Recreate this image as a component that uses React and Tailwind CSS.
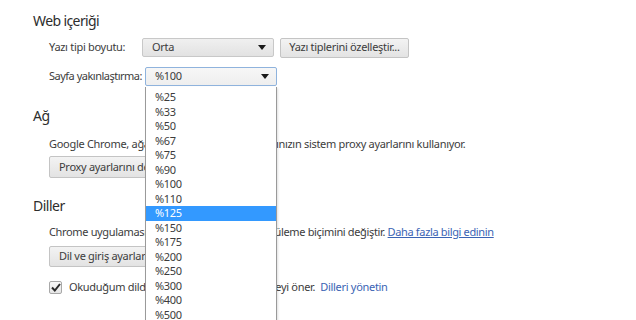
import React from 'react';

const zoomOptions = ['%25', '%33', '%50', '%67', '%75', '%90', '%100', '%110', '%125', '%150', '%175', '%200', '%250', '%300', '%400', '%500'];

function Caret() {
  return (
    <svg width="8" height="5" viewBox="0 0 8 5" className="shrink-0">
      <path d="M0 0 L8 0 L4 5 Z" fill="#1a1a1a" />
    </svg>
  );
}

function Select({ value, focused, children }) {
  return (
    <div className="relative">
      <div
        className={`flex items-center justify-between w-[132px] h-[19px] pl-[9px] pr-[7px] rounded-[2px] border ${
          focused
            ? 'border-[#8fb3dd] bg-gradient-to-b from-[#f7f7f7] to-[#eeeeee]'
            : 'border-[#c8c8c8] bg-gradient-to-b from-[#f0f0f0] to-[#e2e2e2]'
        }`}
      >
        <span>{value}</span>
        <Caret />
      </div>
      {children}
    </div>
  );
}

function Button({ children, className = '' }) {
  return (
    <div
      className={`flex items-center px-[9px] rounded-[2px] border border-[#c4c4c4] bg-gradient-to-b from-[#f3f3f3] to-[#e3e3e3] whitespace-nowrap ${className}`}
    >
      {children}
    </div>
  );
}

export default function App() {
  return (
    <div
      className="w-[636px] h-[320px] overflow-hidden bg-white text-[11px] tracking-[-0.3px] text-[#3c3c3c] select-none"
      style={{ fontFamily: '"Noto Sans", "Open Sans", sans-serif' }}
    >
      <div className="pl-[33px] pt-[11px]">
        {/* Web içeriği */}
        <h3 className="text-[14px] tracking-[-0.6px] text-[#2d2d2d] leading-[20px]">Web içeriği</h3>
        <div className="pl-[16px] mt-[7px] flex flex-col gap-[10px]">
          <div className="flex items-center h-[19px] whitespace-nowrap">
            <span className="w-[93px]">Yazı tipi boyutu:</span>
            <Select value="Orta" />
            <Button className="ml-[6px] w-[129px] h-[20px] justify-center">Yazı tiplerini özelleştir...</Button>
          </div>
          <div className="flex items-center h-[19px] whitespace-nowrap">
            <span className="w-[96px] tracking-[-0.5px]">Sayfa yakınlaştırma:</span>
            <Select value="%100" focused>
              <ul className="absolute left-0 top-[20px] w-[132px] pt-[3px] bg-white border border-[#9a9a9a] border-t-0 z-10 shadow-[1px_1px_2px_rgba(0,0,0,0.12)]">
                {zoomOptions.map((o) => (
                  <li
                    key={o}
                    className={`h-[14.5px] leading-[14.5px] pl-[9px] ${
                      o === '%125' ? 'bg-[#3399ff] text-white' : ''
                    }`}
                  >
                    {o}
                  </li>
                ))}
              </ul>
            </Select>
          </div>
        </div>

        {/* Ağ */}
        <h3 className="text-[14px] tracking-[-0.5px] text-[#2d2d2d] leading-[20px] mt-[20px]">Ağ</h3>
        <div className="pl-[16px] mt-[10px]">
          <p className="leading-[16px] whitespace-nowrap">
            Google Chrome, ağa bağlanmak için bilgisayarınızın sistem proxy ayarlarını kullanıyor.
          </p>
          <Button className="mt-[4px] w-fit h-[22px]">Proxy ayarlarını değiştir...</Button>
        </div>

        {/* Diller */}
        <h3 className="text-[14px] tracking-[-0.5px] text-[#2d2d2d] leading-[20px] mt-[18px]">Diller</h3>
        <div className="pl-[16px] mt-[8px]">
          <p className="leading-[16px] whitespace-nowrap tracking-[-0.35px]">
            Chrome uygulamasının dilleri işleme ve görüntüleme biçimini değiştir.{' '}
            <a className="text-[#3a63b4] underline">Daha fazla bilgi edinin</a>
          </p>
          <Button className="mt-[6px] w-fit h-[21px]">Dil ve giriş ayarları...</Button>
          <div className="flex items-center mt-[12px] whitespace-nowrap">
            <span className="flex items-center justify-center w-[13px] h-[13px] border border-[#a8a8a8] rounded-[2px] bg-gradient-to-b from-[#f8f8f8] to-[#e6e6e6] mr-[7px]">
              <svg width="10" height="9" viewBox="0 0 10 9">
                <path d="M1 4.5 L3.8 7.5 L9 1" stroke="#2a2a2a" strokeWidth="2" fill="none" />
              </svg>
            </span>
            <span>Okuduğum dilde olmayan sayfaları çevirmeyi öner.</span>
            <a className="ml-[5px] text-[#3a63b4]">Dilleri yönetin</a>
          </div>
        </div>
      </div>
    </div>
  );
}
